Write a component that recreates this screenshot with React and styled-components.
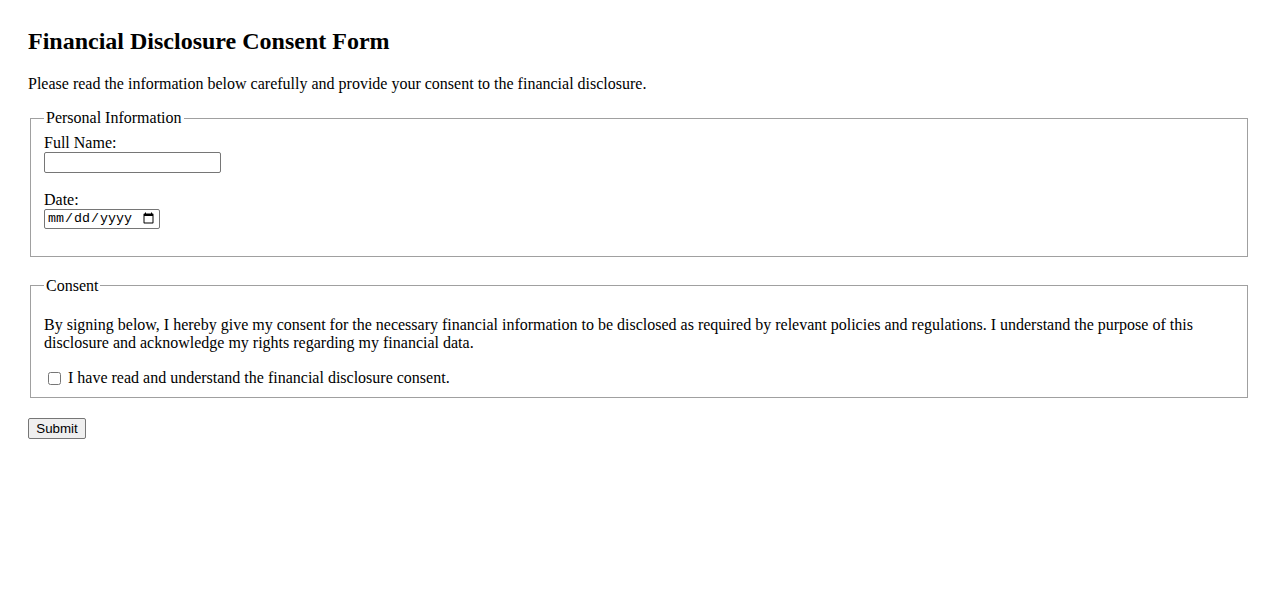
import React from "react";
import styled, { createGlobalStyle } from "styled-components";

const Global = createGlobalStyle`
  html, body { margin: 0; padding: 0; background: #fff; }
  body {
    font-family: "Liberation Serif", "Times New Roman", serif;
    font-size: 16px;
    color: #000;
  }
`;

const Page = styled.form`
  padding: 28px;
`;

const Title = styled.h2`
  margin: 0 0 20px;
  font-size: 24px;
  font-weight: bold;
  line-height: 27px;
`;

const Intro = styled.p`
  margin: 0 0 16px;
  line-height: 18px;
`;

const Section = styled.fieldset`
  margin: 0 2px 20px;
  padding: 5.6px 13px 10px;
  border: 1px solid #a0a0a0;
  min-inline-size: min-content;
`;

const Legend = styled.legend`
  padding: 0 2px;
  line-height: 18px;
`;

const Field = styled.div`
  margin-bottom: 17px;
`;

const Label = styled.label`
  display: block;
  line-height: 19px;
`;

const TextInput = styled.input`
  box-sizing: border-box;
  display: block;
  width: 177px;
  height: 21px;
  margin: 0;
  padding: 1px 2px;
  border: 1px solid #767676;
  border-radius: 2px;
  font-family: "Liberation Sans", Arial, sans-serif;
  font-size: 13.33px;
`;

const DateInput = styled.input`
  box-sizing: border-box;
  display: block;
  width: 116px;
  height: 20px;
  margin: 0;
  padding: 1px 2px;
  border: 1px solid #767676;
  border-radius: 2px;
  font-family: "Liberation Mono", monospace;
  font-size: 13.33px;
`;

const Text = styled.p`
  margin: 16px 0;
  line-height: 18px;
`;

const CheckRow = styled.div`
  display: flex;
  align-items: center;
  height: 19px;
  line-height: 18px;
`;

const Check = styled.input`
  width: 13px;
  height: 13px;
  margin: 1px 7px 0 4px;
`;

const Button = styled.button`
  box-sizing: border-box;
  margin: 0;
  padding: 1px 7px;
  width: 58px;
  height: 21px;
  font-family: "Liberation Sans", Arial, sans-serif;
  font-size: 13.33px;
  color: #000;
  background: #efefef;
  border: 1px solid #767676;
  border-radius: 2px;
`;

export default function App() {
  return (
    <>
      <Global />
      <Page onSubmit={(e) => e.preventDefault()}>
        <Title>Financial Disclosure Consent Form</Title>
        <Intro>
          Please read the information below carefully and provide your consent to the financial disclosure.
        </Intro>
        <Section>
          <Legend>Personal Information</Legend>
          <Field>
            <Label htmlFor="fullName">Full Name:</Label>
            <TextInput id="fullName" type="text" />
          </Field>
          <Field>
            <Label htmlFor="date">Date:</Label>
            <DateInput id="date" type="date" />
          </Field>
        </Section>
        <Section>
          <Legend>Consent</Legend>
          <Text>
            By signing below, I hereby give my consent for the necessary financial information to be disclosed as
            required by relevant policies and regulations. I understand the purpose of this disclosure and acknowledge
            my rights regarding my financial data.
          </Text>
          <CheckRow>
            <Check type="checkbox" id="agree" />
            <label htmlFor="agree">I have read and understand the financial disclosure consent.</label>
          </CheckRow>
        </Section>
        <Button type="submit">Submit</Button>
      </Page>
    </>
  );
}
